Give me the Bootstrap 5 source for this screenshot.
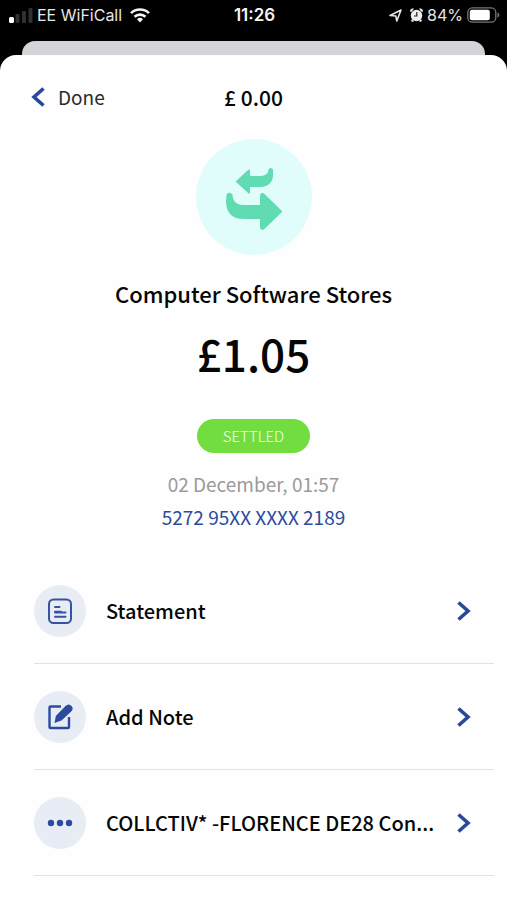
<!DOCTYPE html>
<html lang="en">
<head>
<meta charset="utf-8">
<meta name="viewport" content="width=device-width, initial-scale=1">
<title>Transaction details</title>
<link href="https://cdn.jsdelivr.net/npm/bootstrap@5.3.0/dist/css/bootstrap.min.css" rel="stylesheet">
<style>
  body { background: #000; font-family: "Noto Sans CJK SC", "Noto Sans", sans-serif; color: #060606; }
  svg { display: block; flex-shrink: 0; }
  .status { height: 41px; padding: 0 7px 11px 9px; font: 400 16px/30px Inter, sans-serif; color: #e6e6e6; }
  .status-side { flex: 1 1 0; }
  .clock { font-size: 17px; font-weight: 600; color: #f4f4f4; }
  .sheet-back { height: 14px; margin: 0 22px; border-radius: 13px 13px 0 0; background: #d5d5d9; }
  .sheet { background: #fefefe; border-radius: 16px 16px 0 0; min-height: calc(100vh - 55px); }
  .top { padding: 26px 30px 0; }
  .side { flex: 1 1 0; }
  .back { font-size: 19px; line-height: 32px; color: #2b2b2b; gap: 12px; }
  .balance { font-size: 21px; font-weight: 500; line-height: 32px; }
  .emblem { width: 116px; height: 116px; margin-top: 26px; background: #e0fdfc; }
  .merchant { font-size: 22px; font-weight: 500; line-height: 32px; margin: 22px 0 0; }
  .amount { font-size: 44px; font-weight: 500; line-height: 60px; margin: 14px 0 0; }
  .settled { font-size: 15px; font-weight: 300; line-height: 34px; padding: 0 26px; margin-top: 36px; background: #72dd3e; color: #f4ffee; }
  .date { font-size: 19px; line-height: 32px; margin-top: 15px; color: #9b9b9b; }
  .pan { font-size: 19px; line-height: 32px; margin-top: 1px; color: #2c4b9b; }
  .actions { margin: 25px 13px 0 34px; }
  .action { height: 106px; padding: 0 23px 0 0; border: 0; border-bottom: 1px solid #e2e2e4; background: none; gap: 20px; font-size: 20px; font-weight: 500; color: #060606; }
  .dot { width: 52px; height: 52px; background: #e8ecf5; flex-shrink: 0; }
</style>
</head>
<body>
<header class="status d-flex align-items-center">
  <div class="status-side d-flex align-items-center">
    <svg width="24" height="16" viewBox="0 0 24 16" aria-hidden="true"><rect x="0" y="10" width="5" height="6" rx="1.5" fill="#fff"/><g fill="#303030"><rect x="6.500" y="7" width="4" height="9" rx="1"/><rect x="13" y="4" width="4" height="12" rx="1"/><rect x="19.500" y="1" width="4" height="15" rx="1"/></g></svg>
    <span class="ms-1">EE WiFiCall</span>
    <svg class="ms-2" width="20" height="16" viewBox="0 0 20 16" fill="none" stroke="#f4f4f4" stroke-width="2.600" aria-hidden="true"><path d="M1 6.200a12.800 12.800 0 0 1 18 0M4.500 9.800a8 8 0 0 1 11 0"/><path d="M10 15.500l-3-3.200a4.300 4.300 0 0 1 6 0z" fill="#f4f4f4" stroke="none"/></svg>
  </div>
  <div class="clock">11:26</div>
  <div class="status-side d-flex align-items-center justify-content-end">
    <svg width="13" height="13" viewBox="0 0 13 13" fill="none" stroke="#e6e6e6" stroke-width="1.600" stroke-linejoin="round" aria-hidden="true"><path d="M1 6.500L12 1 7.800 12 6.800 7z"/></svg>
    <svg class="ms-2" width="13" height="14" viewBox="0 0 13 14" aria-hidden="true"><path d="M0 3.500C0 1 2 0 4 .8L1.200 4zM13 3.500C13 1 11 0 9 .8L11.800 4zM2 11l2 2-1 1-2-1zM11 11l-2 2 1 1 2-1z" fill="#eee"/><circle cx="6.500" cy="7.500" r="5.700" fill="#eee"/><path d="M6.800 4v4H4" fill="none" stroke="#222" stroke-width="1.200"/></svg>
    <span class="ms-1 me-1">84%</span>
    <svg width="33" height="16" viewBox="0 0 33 16" aria-hidden="true"><rect x=".8" y=".8" width="28" height="14.400" rx="4.500" fill="none" stroke="#777" stroke-width="1.300"/><rect x="2.800" y="2.700" width="20" height="10.600" rx="2" fill="#fff"/><path d="M30.500 5.500c2.500.6 2.500 4.400 0 5z" fill="#777"/></svg>
  </div>
</header>
<div class="sheet-back"></div>
<main class="sheet">
  <div class="top d-flex align-items-center">
    <div class="side"><button type="button" class="back btn border-0 p-0 d-flex align-items-center"><svg width="16" height="20" viewBox="0 0 16 20" fill="none" stroke="#27489b" stroke-width="3.600" aria-hidden="true"><path d="M13.500 1.500L4 10l9.500 8.500"/></svg>Done</button></div>
    <div class="balance">£ 0.00</div>
    <div class="side"></div>
  </div>
  <section class="d-flex flex-column align-items-center text-center">
    <div class="emblem rounded-circle d-flex align-items-center justify-content-center">
      <svg width="116" height="116" viewBox="0 0 116 116" fill="#61dbb1" stroke="#61dbb1" stroke-width="2" stroke-linejoin="round" aria-hidden="true"><path d="M41 42.500L53 31.500V38H63c7 0 10-2 10.500-7q1.500-2 2.500 0v5c0 7-5 11-11 11H53v6.500z"/><path d="M31.500 56q1.500-2.500 4 0c.5 8 5 11 13 11H65V56q1.500-2 3 0L85 72.500 68 89q-1.500 2-3 0V79H48C36 79 31 72 31 62z"/></svg>
    </div>
    <h1 class="merchant">Computer Software Stores</h1>
    <p class="amount">£1.05</p>
    <span class="settled rounded-pill">SETTLED</span>
    <p class="date mb-0">02 December, 01:57</p>
    <p class="pan mb-0">5272 95XX XXXX 2189</p>
  </section>
  <nav class="actions d-flex flex-column" aria-label="Transaction actions">
    <button type="button" class="action d-flex align-items-center text-start">
      <span class="dot rounded-circle d-flex align-items-center justify-content-center"><svg width="26" height="26" viewBox="0 0 26 26" fill="none" stroke="#3652a0" stroke-width="2" stroke-linecap="round" aria-hidden="true"><rect x="2" y="1.500" width="22" height="23.500" rx="4.500"/><path d="M8 9h4.500M8 13.800h6M8 14.400h10.500M8 18.800h10.500"/></svg></span>
      <span class="flex-grow-1 text-truncate">Statement</span>
      <svg width="14" height="20" viewBox="0 0 14 20" fill="none" stroke="#2a489b" stroke-width="3.600" aria-hidden="true"><path d="M1.500 1.500L11 10l-9.500 8.500"/></svg>
    </button>
    <button type="button" class="action d-flex align-items-center text-start">
      <span class="dot rounded-circle d-flex align-items-center justify-content-center"><svg width="26" height="26" viewBox="0 0 26 26" fill="none" stroke="#2c4b9f" stroke-width="2.400" stroke-linejoin="round" aria-hidden="true"><path d="M14 2.500H3.500a1 1 0 0 0-1 1V23a1 1 0 0 0 1 1H21a1 1 0 0 0 1-1V13"/><path d="M7.500 19l1.300-7L18.500 2q3.300-3 6 0 2.500 2.700-.3 5.500L14.500 16.500z" fill="#2c4b9f" stroke="none"/></svg></span>
      <span class="flex-grow-1 text-truncate">Add Note</span>
      <svg width="14" height="20" viewBox="0 0 14 20" fill="none" stroke="#2a489b" stroke-width="3.600" aria-hidden="true"><path d="M1.500 1.500L11 10l-9.500 8.500"/></svg>
    </button>
    <button type="button" class="action d-flex align-items-center text-start">
      <span class="dot rounded-circle d-flex align-items-center justify-content-center"><svg width="26" height="8" viewBox="0 0 26 8" fill="#2c4b9f" aria-hidden="true"><circle cx="4" cy="4" r="3.200"/><circle cx="13" cy="4" r="3.200"/><circle cx="22" cy="4" r="3.200"/></svg></span>
      <span class="flex-grow-1 text-truncate">COLLCTIV* -FLORENCE DE28 Con...</span>
      <svg width="14" height="20" viewBox="0 0 14 20" fill="none" stroke="#2a489b" stroke-width="3.600" aria-hidden="true"><path d="M1.500 1.500L11 10l-9.500 8.500"/></svg>
    </button>
  </nav>
</main>
<script src="https://cdn.jsdelivr.net/npm/bootstrap@5.3.0/dist/js/bootstrap.bundle.min.js"></script>
</body>
</html>
